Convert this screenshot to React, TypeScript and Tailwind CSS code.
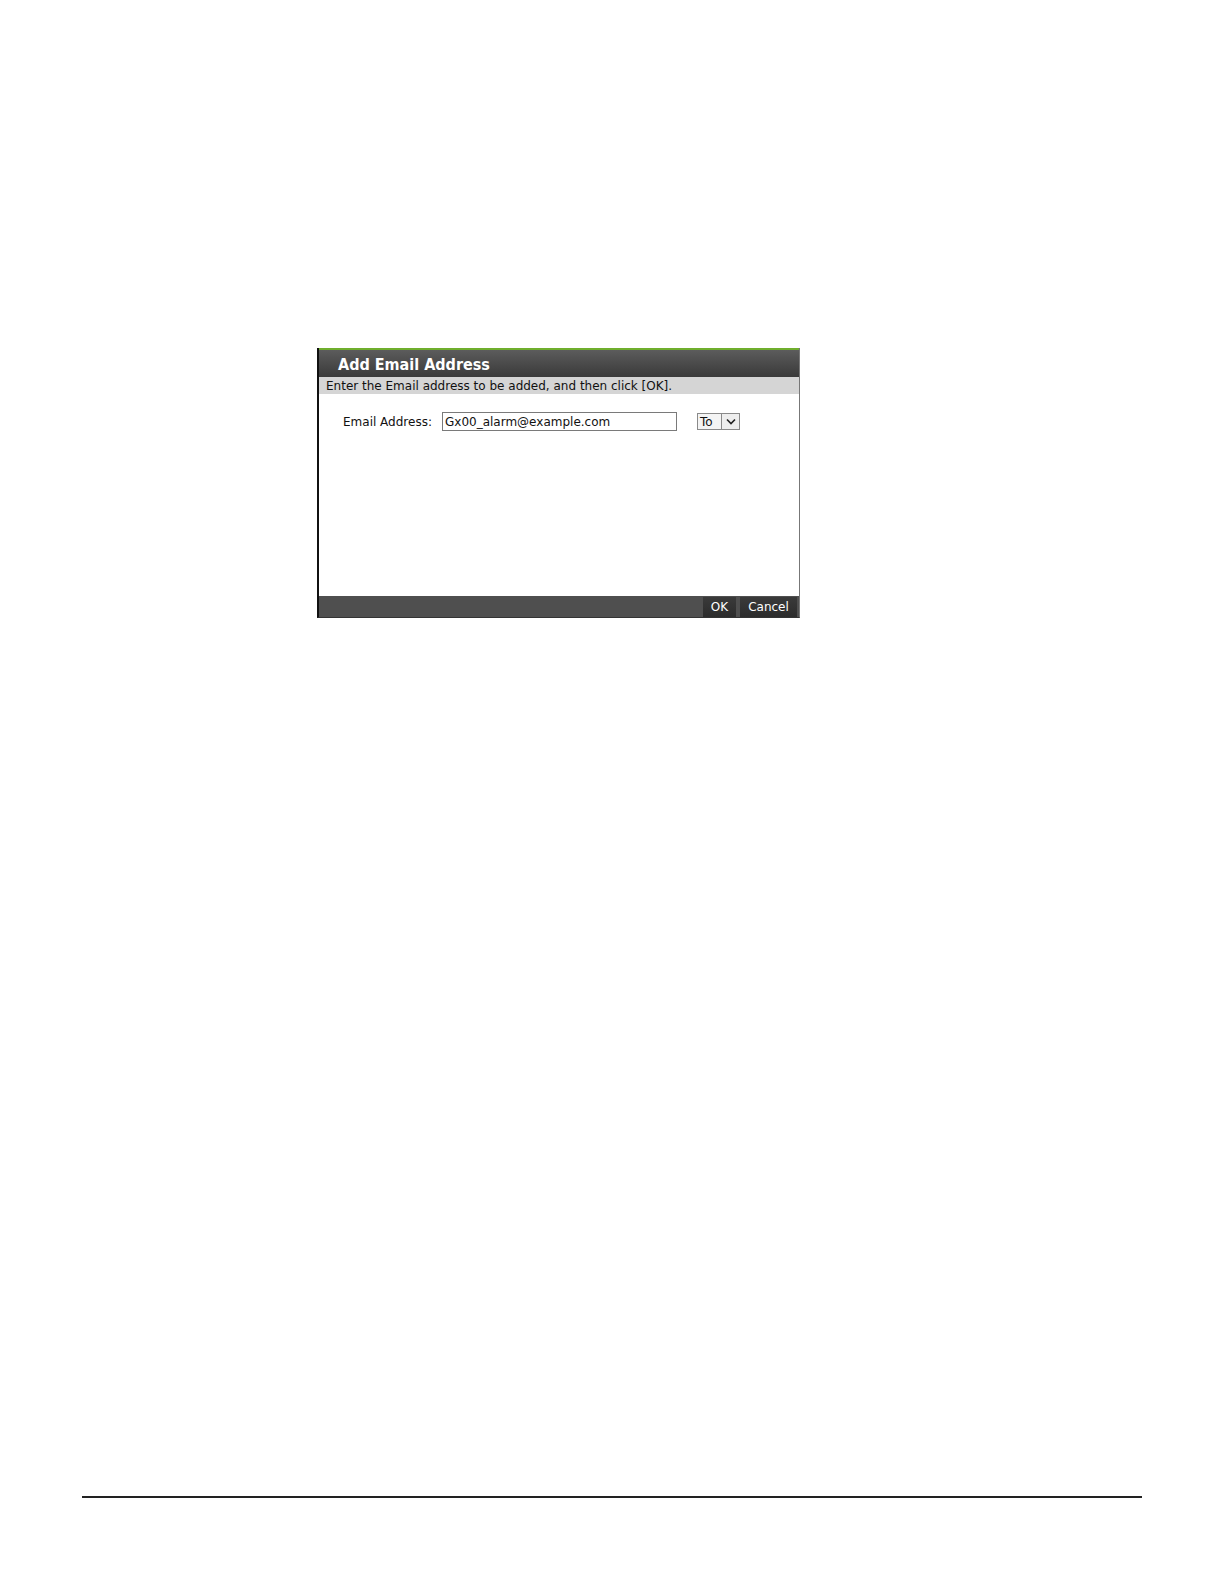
export default function App() {
  return (
    <div className="relative w-[1224px] h-[1584px] bg-white" style={{ fontFamily: "'DejaVu Sans', sans-serif" }}>
      <div className="pt-[348px] pl-[317px]">
        {/* dialog */}
        <div className="w-[483px] h-[270px] flex flex-col border-l-2 border-l-[#111] border-r border-r-[#777] border-b border-b-[#333] bg-white">
          <div className="h-[2px] bg-[#6fae2d]" />
          <div className="h-[27px] bg-gradient-to-b from-[#5c5c5c] to-[#3a3a3a] flex items-center pl-[19px] pt-[2px]">
            <span className="text-white font-bold text-[16px] leading-none" style={{ fontFamily: "'DejaVu Sans Condensed', 'DejaVu Sans', sans-serif" }}>
              Add Email Address
            </span>
          </div>
          <div className="h-[17px] bg-[#d5d5d5] flex items-center pl-[7px] text-[12px] text-[#111] leading-none">
            Enter the Email address to be added, and then click [OK].
          </div>
          <div className="flex-1 pt-[18px] pl-[24px]">
            <div className="flex items-center">
              <span className="text-[12px] text-[#111] w-[99px]">Email Address:</span>
              <div className="w-[235px] h-[19px] border border-[#7a7a7a] flex items-center pl-[2px] text-[12px] text-[#111]">
                Gx00_alarm@example.com
              </div>
              <div className="ml-[20px] w-[43px] h-[17px] border border-[#8a8a8a] flex items-stretch text-[12px] text-[#111]">
                <span className="flex-1 flex items-center pl-[2px] bg-[#f4f4f4]">To</span>
                <span className="w-[18px] border-l border-[#8a8a8a] flex items-center justify-center bg-[#eeeeee]">
                  <svg width="10" height="7" viewBox="0 0 10 7">
                    <path d="M1 1.5 L5 5.5 L9 1.5" fill="none" stroke="#222" strokeWidth="1.6" />
                  </svg>
                </span>
              </div>
            </div>
          </div>
          <div className="h-[21px] bg-[#4f4f4f] flex items-stretch justify-end pr-[2px] gap-[4px] pt-[1px]">
            <span className="w-[33px] bg-gradient-to-b from-[#3a3a3a] to-[#2c2c2c] text-white text-[12px] flex items-center justify-center">OK</span>
            <span className="w-[57px] bg-gradient-to-b from-[#3a3a3a] to-[#2c2c2c] text-white text-[12px] flex items-center justify-center">Cancel</span>
          </div>
        </div>
      </div>
      <div className="absolute left-[82px] top-[1496px] w-[1060px] h-[2px] bg-[#222]" />
    </div>
  );
}
